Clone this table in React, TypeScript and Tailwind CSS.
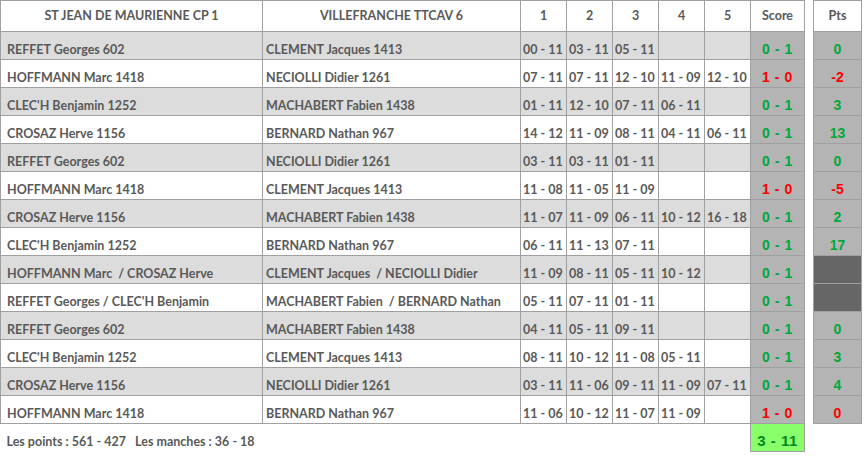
type Row = {
  home: string;
  away: string;
  sets: string[];
  score: string;
  win: boolean;
  pts: string | null;
};

const rows: Row[] = [
  { home: "REFFET Georges 602", away: "CLEMENT Jacques 1413", sets: ["00 - 11", "03 - 11", "05 - 11", "", ""], score: "0 - 1", win: false, pts: "0" },
  { home: "HOFFMANN Marc 1418", away: "NECIOLLI Didier 1261", sets: ["07 - 11", "07 - 11", "12 - 10", "11 - 09", "12 - 10"], score: "1 - 0", win: true, pts: "-2" },
  { home: "CLEC'H Benjamin 1252", away: "MACHABERT Fabien 1438", sets: ["01 - 11", "12 - 10", "07 - 11", "06 - 11", ""], score: "0 - 1", win: false, pts: "3" },
  { home: "CROSAZ Herve 1156", away: "BERNARD Nathan 967", sets: ["14 - 12", "11 - 09", "08 - 11", "04 - 11", "06 - 11"], score: "0 - 1", win: false, pts: "13" },
  { home: "REFFET Georges 602", away: "NECIOLLI Didier 1261", sets: ["03 - 11", "03 - 11", "01 - 11", "", ""], score: "0 - 1", win: false, pts: "0" },
  { home: "HOFFMANN Marc 1418", away: "CLEMENT Jacques 1413", sets: ["11 - 08", "11 - 05", "11 - 09", "", ""], score: "1 - 0", win: true, pts: "-5" },
  { home: "CROSAZ Herve 1156", away: "MACHABERT Fabien 1438", sets: ["11 - 07", "11 - 09", "06 - 11", "10 - 12", "16 - 18"], score: "0 - 1", win: false, pts: "2" },
  { home: "CLEC'H Benjamin 1252", away: "BERNARD Nathan 967", sets: ["06 - 11", "11 - 13", "07 - 11", "", ""], score: "0 - 1", win: false, pts: "17" },
  { home: "HOFFMANN Marc  / CROSAZ Herve", away: "CLEMENT Jacques  / NECIOLLI Didier", sets: ["11 - 09", "08 - 11", "05 - 11", "10 - 12", ""], score: "0 - 1", win: false, pts: null },
  { home: "REFFET Georges / CLEC'H Benjamin", away: "MACHABERT Fabien  / BERNARD Nathan", sets: ["05 - 11", "07 - 11", "01 - 11", "", ""], score: "0 - 1", win: false, pts: null },
  { home: "REFFET Georges 602", away: "MACHABERT Fabien 1438", sets: ["04 - 11", "05 - 11", "09 - 11", "", ""], score: "0 - 1", win: false, pts: "0" },
  { home: "CLEC'H Benjamin 1252", away: "CLEMENT Jacques 1413", sets: ["08 - 11", "10 - 12", "11 - 08", "05 - 11", ""], score: "0 - 1", win: false, pts: "3" },
  { home: "CROSAZ Herve 1156", away: "NECIOLLI Didier 1261", sets: ["03 - 11", "11 - 06", "09 - 11", "11 - 09", "07 - 11"], score: "0 - 1", win: false, pts: "4" },
  { home: "HOFFMANN Marc 1418", away: "BERNARD Nathan 967", sets: ["11 - 06", "10 - 12", "11 - 07", "11 - 09", ""], score: "1 - 0", win: true, pts: "0" },
];

const cell = "border border-[#a0a0a0] h-[28px] align-bottom pb-[3px] whitespace-pre";
const arial = { fontFamily: "'Liberation Sans', Arial, sans-serif" };

export default function App() {
  return (
    <div className="bg-white w-[865px] h-[460px] text-[#595959] font-bold text-[12.5px] leading-none" style={{ fontFamily: "Lato, 'Liberation Sans', sans-serif" }}>
      <table className="border-collapse table-fixed w-[861px]">
        <colgroup>
          <col className="w-[262px]" />
          <col className="w-[258px]" />
          <col className="w-[46px]" />
          <col className="w-[46px]" />
          <col className="w-[46px]" />
          <col className="w-[46px]" />
          <col className="w-[46px]" />
          <col className="w-[54px]" />
          <col className="w-[9px]" />
          <col className="w-[48px]" />
        </colgroup>
        <thead>
          <tr className="h-[31px]">
            <th className="border border-[#a0a0a0] align-middle font-bold">ST JEAN DE MAURIENNE CP 1</th>
            <th className="border border-[#a0a0a0] align-middle font-bold">VILLEFRANCHE TTCAV 6</th>
            {["1", "2", "3", "4", "5", "Score"].map((h) => (
              <th key={h} className="border border-[#a0a0a0] align-middle font-bold">{h}</th>
            ))}
            <th className="border-0"></th>
            <th className="border border-[#a0a0a0] align-middle font-bold">Pts</th>
          </tr>
        </thead>
        <tbody>
          {rows.map((r, i) => {
            const bg = i % 2 === 0 ? "bg-[#dcdcdc]" : "bg-white";
            const col = r.win ? "text-[#ff0000]" : "text-[#00a83a]";
            return (
              <tr key={i}>
                <td className={`${cell} ${bg} pl-[6px] text-left`}>{r.home}</td>
                <td className={`${cell} ${bg} pl-[3px] text-left`}>{r.away}</td>
                {r.sets.map((s, j) => (
                  <td key={j} className={`${cell} ${bg} pl-[2px] text-left`}>{s}</td>
                ))}
                <td className={`${cell} bg-[#b4b4b4] text-center text-[14px] tracking-[0.6px] ${col}`} style={arial}>{r.score}</td>
                <td className="border-0"></td>
                {r.pts === null ? (
                  <td className={`${cell} bg-[#666666]`}></td>
                ) : (
                  <td className={`${cell} bg-[#b4b4b4] text-center text-[14px] ${col}`} style={arial}>{r.pts}</td>
                )}
              </tr>
            );
          })}
          <tr className="h-[28px]">
            <td colSpan={7} className="border-0 align-bottom pb-[3px] pl-[6px] text-left whitespace-pre">Les points : 561 - 427   Les manches : 36 - 18</td>
            <td className="border border-[#a0a0a0] bg-[#88ff6b] align-bottom pb-[3px] text-center text-[15px] text-[#008a20] tracking-[0.5px]" style={arial}>3 - 11</td>
            <td className="border-0"></td>
            <td className="border-0"></td>
          </tr>
        </tbody>
      </table>
    </div>
  );
}
